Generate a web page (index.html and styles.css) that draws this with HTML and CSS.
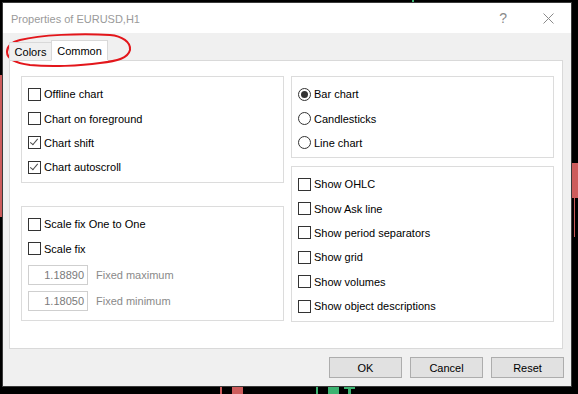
FILE: index.html
```html
<!DOCTYPE html>
<html lang="en">
<head>
  <meta charset="UTF-8" />
  <title>Properties of EURUSD,H1</title>
  <link rel="stylesheet" href="styles.css">
</head>

<body>
  <!-- chart candles peeking out behind the dialog -->
  <div class="chart">
    <span class="piece red c-left"></span>
    <span class="piece red c-right"></span>
    <span class="piece red c-right-wick"></span>
    <span class="piece red c-b1"></span>
    <span class="piece red c-b2"></span>
    <span class="piece green c-b3"></span>
    <span class="piece green c-b4"></span>
    <span class="piece green c-b5"></span>
    <span class="piece green c-b5-wick"></span>
    <span class="piece green c-top"></span>
  </div>

  <div class="window">
    <div class="titlebar">
      <span class="title">Properties of EURUSD,H1</span>
      <span class="help">?</span>
      <svg class="close" width="11" height="11" viewBox="0 0 11 11">
        <path d="M0.5 0.5 L10.5 10.5 M10.5 0.5 L0.5 10.5" stroke="#8a8a8a" stroke-width="1" fill="none"/>
      </svg>
    </div>

    <div class="client">
      <div class="tabs">
        <div class="tab">Colors</div>
        <div class="tab active">Common</div>
      </div>

      <div class="page">
        <div class="col col-left">
          <div class="group g-chart">
            <div class="row"><span class="box"></span>Offline chart</div>
            <div class="row"><span class="box"></span>Chart on foreground</div>
            <div class="row"><span class="box checked"></span>Chart shift</div>
            <div class="row"><span class="box checked"></span>Chart autoscroll</div>
          </div>
          <div class="group g-scale">
            <div class="row"><span class="box"></span>Scale fix One to One</div>
            <div class="row"><span class="box"></span>Scale fix</div>
            <div class="fixed first"><span class="num">1.18890</span>Fixed maximum</div>
            <div class="fixed"><span class="num">1.18050</span>Fixed minimum</div>
          </div>
        </div>

        <div class="col col-right">
          <div class="group g-type">
            <div class="row"><span class="radio on"></span>Bar chart</div>
            <div class="row"><span class="radio"></span>Candlesticks</div>
            <div class="row"><span class="radio"></span>Line chart</div>
          </div>
          <div class="group g-show">
            <div class="row"><span class="box"></span>Show OHLC</div>
            <div class="row"><span class="box"></span>Show Ask line</div>
            <div class="row"><span class="box"></span>Show period separators</div>
            <div class="row"><span class="box"></span>Show grid</div>
            <div class="row"><span class="box"></span>Show volumes</div>
            <div class="row"><span class="box"></span>Show object descriptions</div>
          </div>
        </div>
      </div>

      <div class="buttons">
        <button>OK</button>
        <button>Cancel</button>
        <button>Reset</button>
      </div>
    </div>
  </div>

  <!-- hand-drawn red circle around the tabs -->
  <svg class="mark" width="578" height="394" viewBox="0 0 578 394">
    <path d="M110 35 C122 36, 131 42, 130 50 C128 58, 118 61, 100 63 C80 66, 50 67, 30 65 C15 63, 7 58, 7 52 C7 46, 12 42, 20 40 C40 35, 80 33, 110 35 Z"
          fill="none" stroke="#e3161b" stroke-width="2"/>
  </svg>
</body>
</html>
```

FILE: styles.css
```css
body {
  margin: 0;
  width: 578px;
  height: 394px;
  padding: 2px 0 0 2px;
  box-sizing: border-box;
  background: #000;
  overflow: hidden;
  position: relative;
  font-family: "Liberation Sans", Arial, sans-serif;
  font-size: 11px;
  color: #000;
}

/* chart bits behind the window */
.piece {
  position: absolute;
  display: block;
}

.red { background: #cd5c5c; }
.green { background: #3cb371; }

.c-left { left: 0; top: 75px; width: 2px; height: 142px; }
.c-right { left: 572px; top: 163px; width: 6px; height: 35px; }
.c-right-wick { left: 574px; top: 198px; width: 1px; height: 39px; }
.c-b1 { left: 220px; top: 386px; width: 2px; height: 8px; }
.c-b2 { left: 232px; top: 386px; width: 11px; height: 8px; }
.c-b3 { left: 316px; top: 386px; width: 2px; height: 8px; }
.c-b4 { left: 328px; top: 386px; width: 11px; height: 8px; }
.c-b5 { left: 344px; top: 386px; width: 11px; height: 3px; }
.c-b5-wick { left: 348px; top: 389px; width: 3px; height: 5px; }
.c-top { left: 412px; top: 0; width: 2px; height: 2px; }

.mark {
  position: absolute;
  left: 0;
  top: 0;
  pointer-events: none;
}

/* window */
.window {
  position: relative;
  width: 570px;
  height: 385px;
  border: 1px solid #3b3b3b;
  box-sizing: border-box;
  background: #f0f0f0;
  display: flex;
  flex-direction: column;
}

.titlebar {
  height: 30px;
  background: #fff;
  display: flex;
  align-items: center;
  padding-left: 8px;
  color: #9a9a9a;
  flex-shrink: 0;
}

.title {
  font-size: 11px;
  margin-top: 1px;
}

.help {
  margin-left: auto;
  font-size: 14px;
  color: #8a8a8a;
  margin-right: 36px;
}

.close {
  margin-right: 17px;
}

.client {
  flex: 1;
  padding: 7px 0 0 6px;
}

.tabs {
  display: flex;
  align-items: flex-end;
  height: 21px;
  margin-bottom: -1px;
  position: relative;
  z-index: 1;
}

.tab {
  width: 43px;
  height: 19px;
  border: 1px solid #d9d9d9;
  box-sizing: border-box;
  background: #f0f0f0;
  display: flex;
  align-items: center;
  justify-content: center;
  padding-top: 1px;
}

.tab.active {
  width: 57px;
  height: 21px;
  margin-left: -1px;
  background: #fff;
  border-bottom-color: #fff;
  padding-top: 0;
}

.page {
  width: 554px;
  height: 289px;
  border: 1px solid #d9d9d9;
  box-sizing: border-box;
  background: #fff;
  display: grid;
  grid-template-columns: 263px 263px;
  column-gap: 7px;
  align-content: start;
  padding: 15px 0 0 11px;
}

.col {
  display: flex;
  flex-direction: column;
}

.col-left { gap: 23px; }
.col-right { gap: 8px; }

.group {
  border: 1px solid #dcdcdc;
  box-sizing: border-box;
  padding: 5px 0 0 6px;
}

.g-chart { height: 107px; }
.g-scale { height: 115px; }
.g-type { height: 82px; }
.g-show { height: 156px; }

.row {
  height: 24.4px;
  display: flex;
  align-items: center;
  white-space: nowrap;
}

.box,
.radio {
  width: 13px;
  height: 13px;
  border: 1px solid #333;
  box-sizing: border-box;
  background: #fff;
  margin-right: 3px;
  flex-shrink: 0;
  position: relative;
}

.box.checked::after {
  content: "";
  position: absolute;
  left: 3px;
  top: 0px;
  width: 3px;
  height: 7px;
  border-right: 1.4px solid #4a4a4a;
  border-bottom: 1.4px solid #4a4a4a;
  transform: rotate(40deg);
}

.radio {
  border-radius: 50%;
}

.radio.on::after {
  content: "";
  position: absolute;
  left: 2px;
  top: 2px;
  width: 7px;
  height: 7px;
  border-radius: 50%;
  background: #333;
}

.fixed {
  display: flex;
  align-items: center;
  height: 20px;
  color: #8a8a8a;
}

.fixed.first { margin-top: 4px; }
.fixed + .fixed { margin-top: 6px; }

.num {
  width: 60px;
  height: 20px;
  border: 1px solid #cfcfcf;
  box-sizing: border-box;
  text-align: right;
  padding-right: 3px;
  line-height: 18px;
  color: #7a7a7a;
  margin-right: 8px;
}

.buttons {
  display: flex;
  justify-content: flex-end;
  gap: 8px;
  margin-top: 8px;
  width: 555px;
}

button {
  width: 73px;
  height: 21px;
  padding: 0;
  border: 1px solid #adadad;
  background: #e1e1e1;
  font-family: inherit;
  font-size: 11px;
  color: #000;
}
```
